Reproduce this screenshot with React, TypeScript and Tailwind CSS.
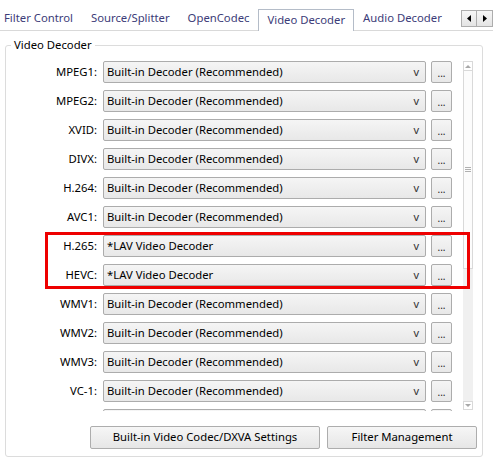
import React from 'react'

const rows = [
  { label: 'MPEG1:', value: 'Built-in Decoder (Recommended)' },
  { label: 'MPEG2:', value: 'Built-in Decoder (Recommended)' },
  { label: 'XVID:', value: 'Built-in Decoder (Recommended)' },
  { label: 'DIVX:', value: 'Built-in Decoder (Recommended)' },
  { label: 'H.264:', value: 'Built-in Decoder (Recommended)' },
  { label: 'AVC1:', value: 'Built-in Decoder (Recommended)' },
  { label: 'H.265:', value: '*LAV Video Decoder' },
  { label: 'HEVC:', value: '*LAV Video Decoder' },
  { label: 'WMV1:', value: 'Built-in Decoder (Recommended)' },
  { label: 'WMV2:', value: 'Built-in Decoder (Recommended)' },
  { label: 'WMV3:', value: 'Built-in Decoder (Recommended)' },
  { label: 'VC-1:', value: 'Built-in Decoder (Recommended)' },
  { label: '', value: '' },
]

const tabs = ['Filter Control', 'Source/Splitter', 'OpenCodec', 'Video Decoder', 'Audio Decoder']

function Tabs() {
  return (
    <div className="flex h-[31px] shrink-0 items-start border-b border-[#d9d9d9]">
      <div className="ml-[-5px] flex h-[31px] min-w-0 flex-1 items-start overflow-hidden">
        {tabs.map((t) =>
          t === 'Video Decoder' ? (
            <div
              key={t}
              className="relative mt-[9px] h-[22px] border border-b-0 border-[#b4bcc8] bg-white px-[8px] pt-[2px] leading-[16px] whitespace-nowrap text-[#3c3c78]"
            >
              {t}
            </div>
          ) : (
            <div key={t} className="h-[31px] px-[9px] pt-[10px] leading-[16px] whitespace-nowrap text-[#3c3c78]">
              {t}
            </div>
          ),
        )}
      </div>
      <div className="mt-[10px] flex h-[17px] shrink-0">
        <div className="flex w-[16px] items-center justify-center border border-[#adadad] bg-linear-to-b from-[#f6f6f6] to-[#e4e4e4]">
          <svg width="4" height="7" viewBox="0 0 4 7">
            <path d="M4 0 L0 3.5 L4 7 Z" fill="#000" />
          </svg>
        </div>
        <div className="-ml-px flex w-[17px] items-center justify-center border border-[#adadad] bg-linear-to-b from-[#f6f6f6] to-[#e4e4e4]">
          <svg width="4" height="7" viewBox="0 0 4 7">
            <path d="M0 0 L4 3.5 L0 7 Z" fill="#000" />
          </svg>
        </div>
      </div>
    </div>
  )
}

function Row({ label, value }: { label: string; value: string }) {
  return (
    <div className="flex h-[22px] shrink-0 items-center">
      <div className="w-[91px] text-right text-black">{label}</div>
      <div className="ml-[6px] flex h-[22px] w-[323px] items-center justify-between rounded-[2px] border border-[#acacac] bg-linear-to-b from-[#f5f5f5] to-[#e8e8e8] pl-[3px] pr-[6px] text-black">
        <span className="whitespace-nowrap">{value}</span>
        {value && <span className="text-[11px] text-[#333]">v</span>}
      </div>
      <div className="ml-[5px] flex h-[22px] w-[21px] items-center justify-center rounded-[2px] border border-[#acacac] bg-linear-to-b from-[#f5f5f5] to-[#e8e8e8] pt-[2px] text-[10px] text-[#222]">
        {value && '...'}
      </div>
    </div>
  )
}

function ScrollBar() {
  return (
    <div className="flex h-[349px] w-[10px] shrink-0 flex-col">
      <div className="flex h-[10px] items-center justify-center border border-[#d9d9d9] bg-white">
        <svg width="6" height="3" viewBox="0 0 6 3">
          <path d="M0 3 L3 0 L6 3 Z" fill="#a8a8a8" />
        </svg>
      </div>
      <div className="flex h-[198px] items-center justify-center border border-t-0 border-[#d9d9d9] bg-[#fcfcfc]">
        <svg width="6" height="5" viewBox="0 0 6 5">
          <path d="M0 0.5 H6 M0 2.5 H6 M0 4.5 H6" stroke="#b0b0b0" strokeWidth="1" />
        </svg>
      </div>
      <div className="flex-1 bg-[#f0f0f0]" />
      <div className="flex h-[9px] items-center justify-center border border-[#d9d9d9] bg-white">
        <svg width="6" height="3" viewBox="0 0 6 3">
          <path d="M0 0 L3 3 L6 0 Z" fill="#a8a8a8" />
        </svg>
      </div>
    </div>
  )
}

function Button({ children, width }: { children: React.ReactNode; width: string }) {
  return (
    <div
      className={`flex h-[23px] items-center justify-center rounded-[2px] border border-[#adadad] bg-linear-to-b from-[#f6f6f6] to-[#e6e6e6] text-black ${width}`}
    >
      {children}
    </div>
  )
}

export default function App() {
  return (
    <div className="relative h-[462px] w-[493px] overflow-hidden bg-white font-['Noto_Sans','Liberation_Sans',sans-serif] text-[11.3px]">
      <Tabs />
      <fieldset className="mx-[5px] mt-[6px] h-[420px] w-[478px] rounded-[3px] border border-[#dcdcdc]">
        <legend className="ml-[5px] px-[3px] leading-[16px] text-black">Video Decoder</legend>
        <div className="mt-[8px] flex h-[350px] overflow-hidden pr-[9px]">
          <div className="flex flex-1 flex-col gap-[7px] overflow-hidden">
            {rows.map((r, i) => (
              <Row key={i} label={r.label} value={r.value} />
            ))}
          </div>
          <ScrollBar />
        </div>
        <div className="mt-[15px] flex justify-end gap-[7px] pr-[5px]">
          <Button width="w-[230px]">Built-in Video Codec/DXVA Settings</Button>
          <Button width="w-[150px]">Filter Management</Button>
        </div>
      </fieldset>
      <div className="absolute left-[45px] top-[232px] h-[57px] w-[425px] border-[3px] border-[#ee0000]" />
    </div>
  )
}
